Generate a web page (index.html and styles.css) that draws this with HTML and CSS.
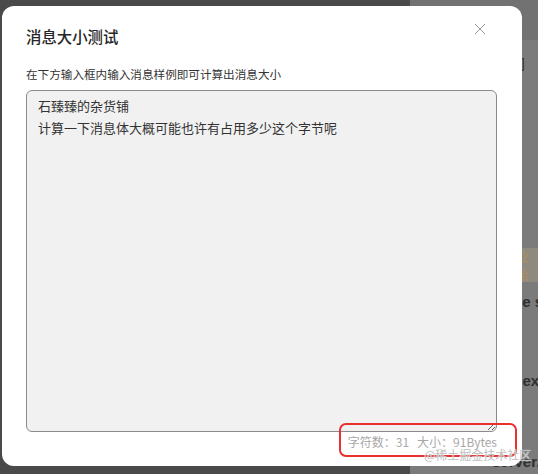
FILE: index.html
```html
<!DOCTYPE html>
<html lang="zh">
<head>
<meta charset="utf-8">
<link rel="stylesheet" href="styles.css">
</head>
<body>
<div class="page">
  <div class="main"></div>
  <div class="side">
    <div class="side-top"></div>
    <div class="row r1">时间</div>
    <div class="tag"><span>业余</span></div>
    <div class="row bold r2">file size</div>
    <div class="row bold r3">index.html</div>
    <div class="row bold r4">server.e</div>
  </div>
</div>
<div class="modal">
  <div class="head">
    <div class="title">消息大小测试</div>
    <svg class="close" width="12" height="12" viewBox="0 0 12 12"><path d="M1 1L11 11M11 1L1 11" stroke="#9a9a9a" stroke-width="1" fill="none"/></svg>
  </div>
  <div class="desc">在下方输入框内输入消息样例即可计算出消息大小</div>
  <textarea class="input">石臻臻的杂货铺
计算一下消息体大概可能也许有占用多少这个字节呢</textarea>
  <div class="count">字符数：31&nbsp;&nbsp;&nbsp;大小：91Bytes</div>
</div>
<div class="mark"></div>
<div class="wm">@稀土掘金技术社区</div>
</body>
</html>
```
FILE: styles.css
```css
html, body {
  margin: 0;
  padding: 0;
  width: 538px;
  height: 474px;
  overflow: hidden;
  font-family: "Noto Sans CJK SC", "Noto Sans", sans-serif;
}
.page {
  display: flex;
  width: 538px;
  height: 474px;
  background: #4a4a4a;
}
.main {
  flex: 1;
  background: #4a4a4a;
}
.side {
  width: 128px;
  background: #7b7b7b;
  display: flex;
  flex-direction: column;
  overflow: hidden;
}
.side-top {
  height: 40px;
  background: #727272;
  flex: none;
}
.row {
  white-space: nowrap;
  color: #2f2f2f;
  font-size: 14px;
  line-height: 20px;
}
.bold {
  font-family: "Liberation Sans", Arial, sans-serif;
  font-weight: bold;
  font-size: 15px;
}
.r1 { margin-top: 13px; padding-left: 87px; }
.tag {
  margin-top: 175px;
  margin-left: 80px;
  height: 34px;
  background: #8e8a7d;
  display: flex;
  align-items: center;
  flex: none;
}
.tag span {
  padding-left: 26px;
  color: #ae8f5c;
  font-size: 13px;
}
.r2 { margin-top: 10px; padding-left: 99px; }
.r3 { margin-top: 59px; padding-left: 90px; }
.r4 { margin-top: 61px; padding-left: 82px; }

.modal {
  position: absolute;
  left: 2px;
  top: 6px;
  width: 520px;
  height: 460px;
  background: #fff;
  border-radius: 12px;
  box-sizing: border-box;
  padding: 18px 25px 0 24px;
  display: flex;
  flex-direction: column;
}
.head {
  display: flex;
  justify-content: space-between;
  align-items: flex-start;
  height: 24px;
}
.title {
  font-size: 15.4px;
  line-height: 24px;
  font-weight: 500;
  color: #262626;
}
.close {
  margin-top: -1px;
  margin-right: 11px;
}
.desc {
  margin-top: 17px;
  font-size: 11.6px;
  line-height: 18px;
  color: #333;
}
.input {
  margin-top: 7px;
  width: 471px;
  height: 342px;
  box-sizing: border-box;
  border: 1px solid #8a8a8a;
  border-radius: 6px;
  background: #f1f1f1;
  padding: 4px 11px;
  font-family: "Noto Sans CJK SC", "Noto Sans", sans-serif;
  font-size: 13px;
  line-height: 22px;
  color: #333;
  resize: vertical;
  outline: none;
}
.count {
  align-self: flex-end;
  margin-top: 1px;
  font-size: 12px;
  line-height: 18px;
  color: #a8a8a8;
}
.mark {
  position: absolute;
  left: 339px;
  top: 423px;
  width: 178px;
  height: 34px;
  box-sizing: border-box;
  border: 2px solid #e8302f;
  border-radius: 7px;
}
.wm {
  position: absolute;
  left: 424px;
  top: 446px;
  font-size: 12px;
  line-height: 18px;
  color: #bdbdbd;
  text-shadow: 0 0 1px #fff;
  white-space: nowrap;
}
```
